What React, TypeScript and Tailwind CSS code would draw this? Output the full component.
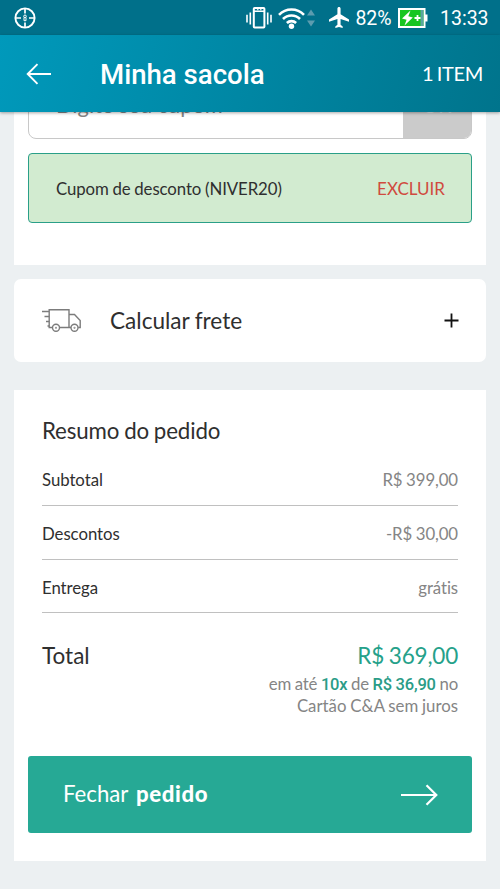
const rows = [
  { label: 'Subtotal', value: 'R$ 399,00' },
  { label: 'Descontos', value: '-R$ 30,00' },
  { label: 'Entrega', value: 'grátis' },
]

function StatusBar() {
  return (
    <div className="h-[35px] shrink-0 bg-[#00708a] flex items-center justify-between pl-[14px] pr-[11px] text-white font-['Roboto',sans-serif]">
      <svg className="w-[22px] h-[22px]" viewBox="0 0 22 22" fill="none" stroke="currentColor">
        <circle cx="11" cy="11" r="9.6" strokeWidth="1.9" />
        <path strokeWidth="1.7" d="M11 1v5.5M11 15.5V21M1 11h6M15 11h6" />
        <circle cx="11" cy="9.3" r="1.3" strokeWidth="1" />
        <path strokeWidth="1" d="M10 10.5v3.2h2v-3.2" />
      </svg>
      <div className="flex items-center">
        {/* Vibrate */}
        <svg className="w-[26px] h-[24px]" viewBox="0 0 26 24" fill="none" stroke="currentColor">
          <rect x="7.8" y="2" width="10.6" height="19.6" rx="0.8" strokeWidth="2" />
          <path strokeWidth="1.6" d="M8 5.2h10M4.3 6.5v12M1 8.8v7.6M21.7 6.5v12M25 8.8v7.6" />
          <path strokeWidth="1" d="M11 3.7h1.5M14 3.7h1.5" />
        </svg>
        {/* Wifi */}
        <svg className="w-[27px] h-[24px] ml-[6px]" viewBox="0 0 27 24" fill="none" stroke="currentColor" strokeWidth="2.6">
          <path d="M1 8.8a17.5 17.5 0 0 1 25 0" />
          <path d="M5 13a12 12 0 0 1 17 0" />
          <path d="M8.9 17a6.6 6.6 0 0 1 9.2 0" />
          <circle cx="13.5" cy="20.3" r="2.7" fill="currentColor" stroke="none" />
        </svg>
        <svg className="w-[8px] h-[20px] ml-[2px]" viewBox="0 0 8 20" fill="#5c9caf">
          <path d="M4 1.5L8 7.5H0zM4 18.5L0 12.5h8z" />
        </svg>
        {/* Airplane */}
        <svg className="w-[20px] h-[21px] ml-[14px]" viewBox="2 2 19 20" preserveAspectRatio="none" fill="currentColor">
          <path d="M21 16v-2l-8-5V3.5c0-.83-.67-1.5-1.5-1.5S10 2.67 10 3.5V9l-8 5v2l8-2.5V19l-2 1.5V22l3.5-1 3.5 1v-1.5L13 19v-5.5l8 2.5z" />
        </svg>
        <span className="w-[43px] ml-[3px] mt-[2px] text-center text-[19.5px] leading-none whitespace-nowrap">82%</span>
        {/* Battery */}
        <svg className="w-[30px] h-[20px] ml-[3px]" viewBox="0 0 30 20">
          <rect x="1" y="1" width="25.5" height="18" fill="#16c621" stroke="#fff" strokeWidth="2" />
          <path fill="#5aa5a0" d="M22.5 2h3v16h-3z" />
          <path fill="#fff" d="M27 6.5h2.5v7H27z" />
          <path fill="#fff" d="M12.5 2.5L4 10.5l4.6 1.2L6.5 17.5 14.8 9.4 10.3 8.2z" />
          <path stroke="#fff" strokeWidth="1.8" d="M19.5 7v6M16.5 10h6" />
        </svg>
        <span className="ml-[12px] w-[49px] mt-[2px] text-[19.5px] leading-none whitespace-nowrap">13:33</span>
      </div>
    </div>
  )
}

function TruckIcon() {
  return (
    <svg className="w-[40px] h-[24px]" viewBox="0 0 40 24" fill="none" stroke="#7c7c7c" strokeWidth="1.4">
      <path d="M10.5 18.5H7.2V.8H27v17.7h-9.5M27 5.5h5.5l5.7 6v7h-2M27 18.5h2" />
      <path d="M0 2.5h7M2.5 7.5h4.7M4 12.5h3.2M5.5 17h1.7" />
      <circle cx="14" cy="18.7" r="3.5" />
      <circle cx="32.5" cy="18.7" r="3.5" />
      <circle cx="14" cy="18.7" r=".3" fill="#7c7c7c" />
      <circle cx="32.5" cy="18.7" r=".3" fill="#7c7c7c" />
    </svg>
  )
}

export default function App() {
  return (
    <div className="w-[500px] h-[889px] overflow-hidden flex flex-col bg-[#ecf0f2] font-['Lato',sans-serif] text-[#2f2f2f]">
      <StatusBar />

      {/* Header */}
      <header className="relative z-10 h-[77px] shrink-0 flex items-center pl-[26px] pr-[17px] text-white bg-linear-[105deg] from-[#0099bb] to-[#00748c] shadow-[0_1px_3px_rgba(0,0,0,0.35)]">
        <svg className="w-[26px] h-[22px]" viewBox="0 0 26 22" fill="none" stroke="currentColor" strokeWidth="1.9">
          <path d="M25 11H2M11.5 1.2L1.7 11l9.8 9.8" />
        </svg>
        <h1 className="ml-[48px] mt-[3px] font-['Roboto',sans-serif] font-medium text-[27.6px] leading-none">Minha sacola</h1>
        <span className="ml-auto -mt-px text-[20px] leading-none tracking-[-0.3px] [word-spacing:-1.5px]">1 ITEM</span>
      </header>

      <main className="flex-1 min-h-0 overflow-hidden px-[14px]">
        {/* Coupon */}
        <section className="flow-root h-[153px] bg-white px-[14px]">
          <div className="-mt-[39px] h-[66px] flex rounded-[8px] border border-[#c8c8c8] overflow-hidden">
            <div className="flex-1 pl-[27px] pt-[16px] text-[21.8px] leading-[30px] text-[#858585]">Digite seu cupom</div>
            <div className="w-[68px] bg-[#cbcbcb] pt-[16px] text-center text-[20px] leading-[30px] text-[#e4e4e4]">OK</div>
          </div>
          <div className="mt-[14px] h-[70px] flex items-center justify-between rounded-[4px] border-[1.5px] border-[#2a9f88] bg-[#d2ebd0] pl-[27px] pr-[26px]">
            <span className="mt-px text-[16.8px] tracking-[-0.08px] [word-spacing:-0.5px]">Cupom de desconto (NIVER20)</span>
            <span className="mt-px text-[17px] text-[#d04a3e]">EXCLUIR</span>
          </div>
        </section>

        {/* Shipping */}
        <section className="mt-[14px] h-[83px] bg-white rounded-[7px] flex items-center pl-[28px] pr-[27px]">
          <TruckIcon />
          <span className="ml-[28px] text-[22.6px] [word-spacing:-0.5px]">Calcular frete</span>
          <svg className="ml-auto w-[15px] h-[15px]" viewBox="0 0 15 15" stroke="#111" strokeWidth="1.8">
            <path d="M7.5 0.5v14M0.5 7.5h14" />
          </svg>
        </section>

        {/* Order summary */}
        <section className="mt-[28px] h-[471px] bg-white px-[14px] pt-[26px]">
          <div className="px-[14px]">
            <h2 className="text-[22.3px] leading-[30px] tracking-[-0.12px] [word-spacing:-0.8px]">Resumo do pedido</h2>
            <div className="mt-[6px]">
              {rows.map((row) => (
                <div key={row.label} className="h-[53.8px] pt-[3px] flex items-center justify-between border-b border-[#c0c0c0] text-[16.8px]">
                  <span className="tracking-[-0.05px]">{row.label}</span>
                  <span className="text-[#858585] tracking-[-0.1px] [word-spacing:-0.5px]">{row.value}</span>
                </div>
              ))}
            </div>
            <div className="mt-[28px] flex items-center justify-between text-[22.5px] leading-[30px]">
              <span>Total</span>
              <span className="text-[#25a18a] tracking-[-0.2px] [word-spacing:-0.8px]">R$ 369,00</span>
            </div>
            <p className="mt-[3px] text-right text-[16.8px] leading-[20.5px] text-[#858585] [word-spacing:-0.5px]">
              <span className="tracking-[-0.17px]">
                em até <b className="font-['Roboto',sans-serif] font-medium text-[16.5px] text-[#2a9c87]">10x</b> de{' '}
                <b className="font-['Roboto',sans-serif] font-medium text-[16.5px] text-[#2a9c87]">R$ 36,90</b> no
              </span>
              <br />
              Cartão C&amp;A sem juros
            </p>
          </div>
          <button className="mt-[39.5px] w-full h-[77.5px] flex items-center justify-between rounded-[3px] bg-[#26a995] pl-[35px] pr-[34px] text-white text-[22.2px]">
            <span className="-mt-[2px] [word-spacing:2.5px]">Fechar <b className="font-black tracking-[0.6px]">pedido</b></span>
            <svg className="w-[37px] h-[22px]" viewBox="0 0 37 22" fill="none" stroke="currentColor" strokeWidth="2.2">
              <path d="M0 11h35M25.5 1.2L35.3 11l-9.8 9.8" />
            </svg>
          </button>
        </section>
      </main>
    </div>
  )
}
